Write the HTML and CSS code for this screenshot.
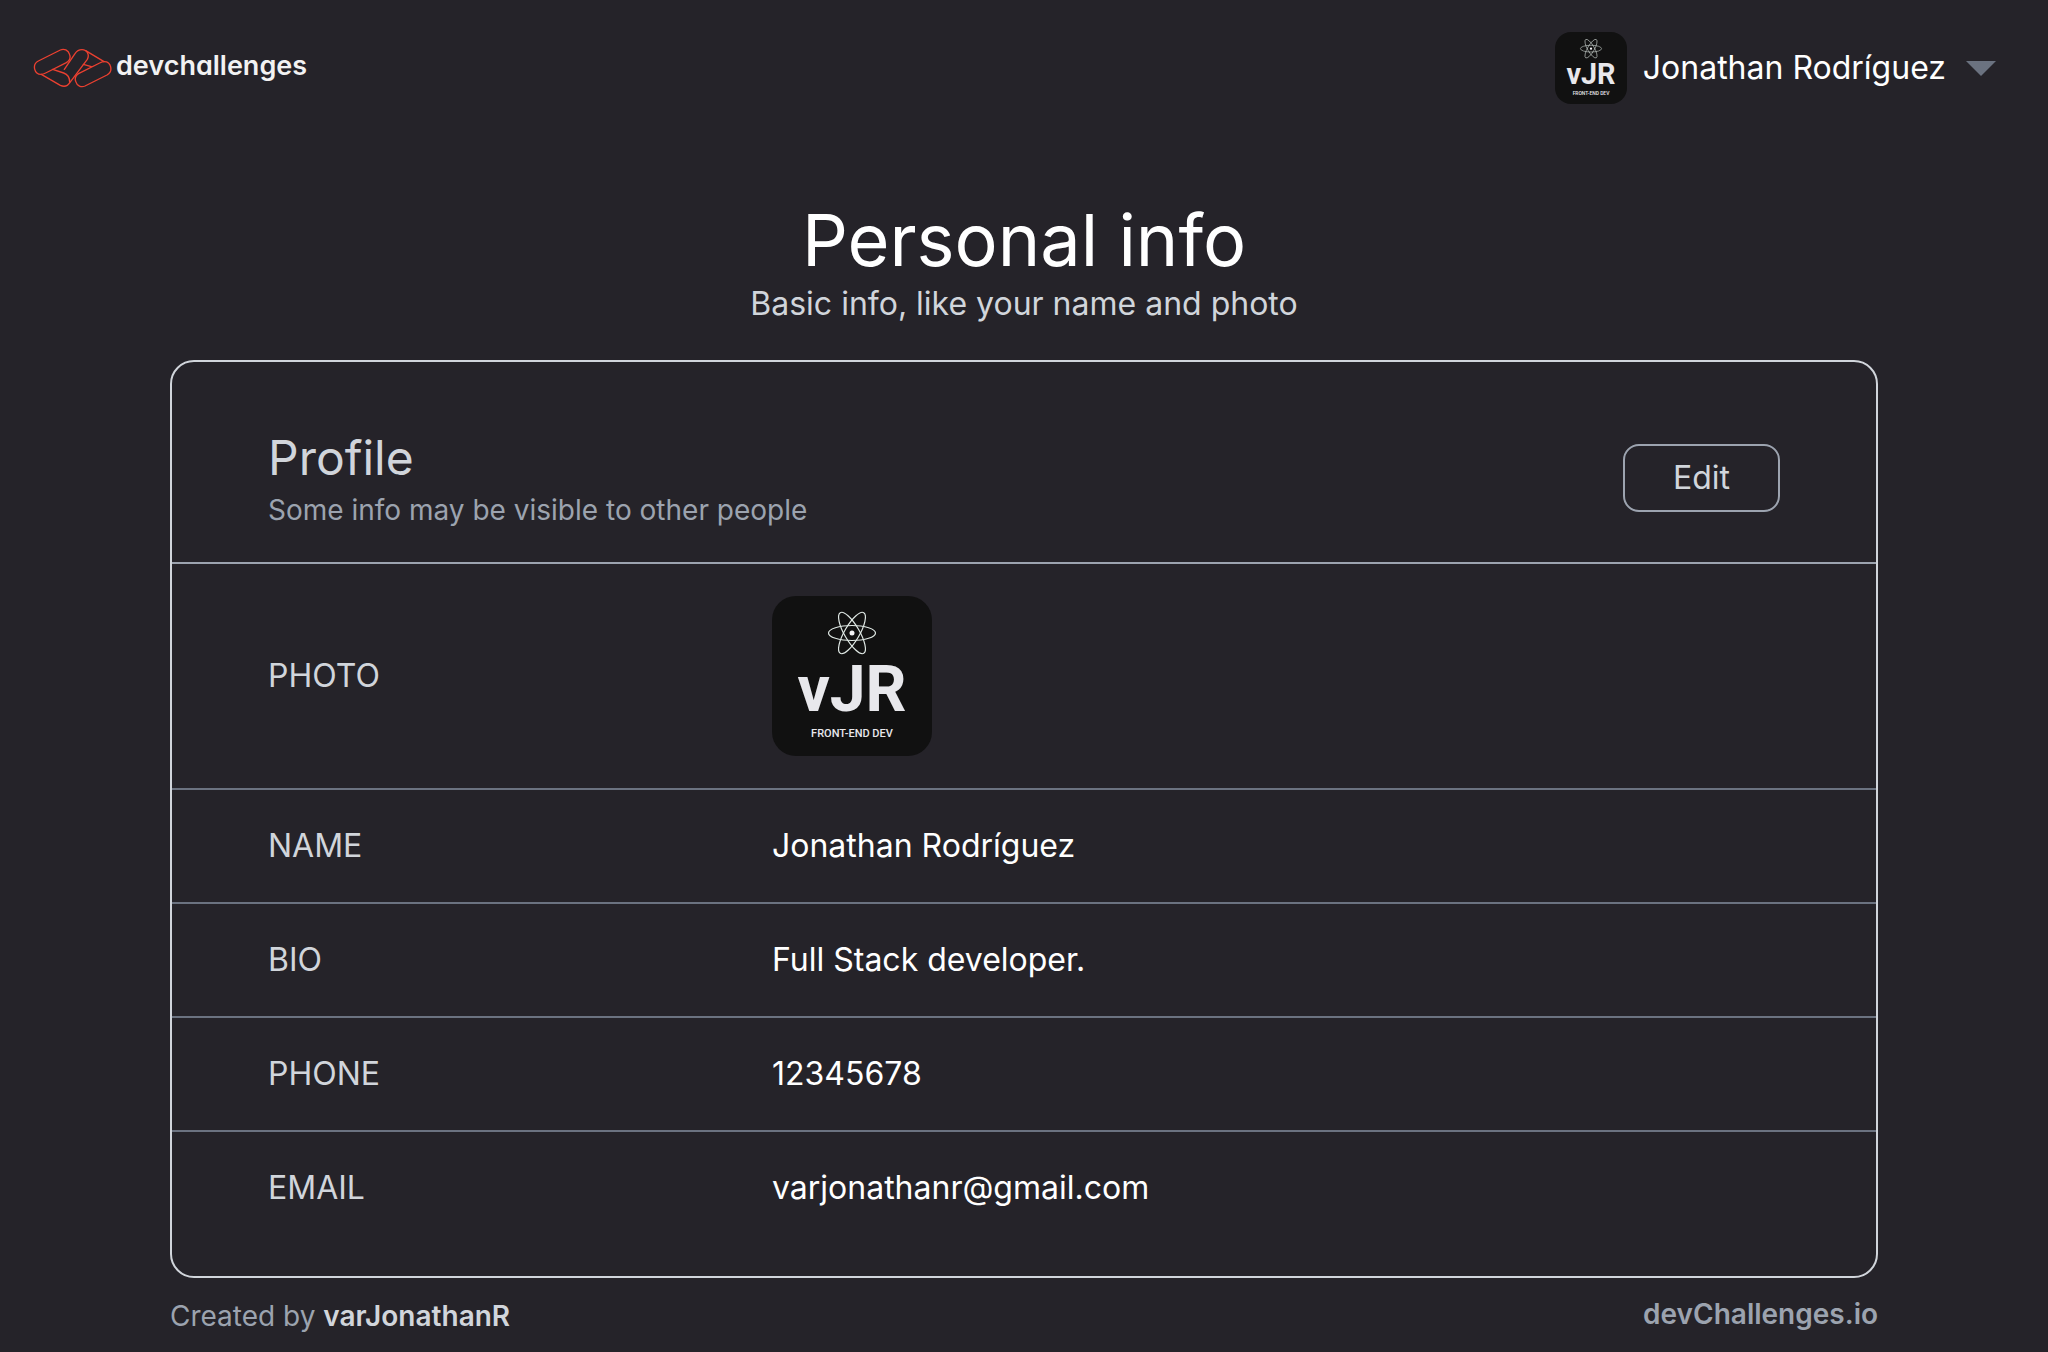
FILE: index.html
```html
<!DOCTYPE html>
<html lang="en">
<head>
<meta charset="utf-8">
<meta name="viewport" content="width=device-width, initial-scale=1">
<title>Personal info</title>
<link rel="stylesheet" href="styles.css">
</head>
<body>
<header class="topbar">
  <a class="brand" href="#">
    <svg class="brand-mark" viewBox="36 54 240 120" aria-hidden="true">
      <g fill="none" stroke="#eb4030" stroke-width="4" stroke-linecap="round" stroke-linejoin="round">
        <path d="M121 60L55 93C35 104 43 133 63 133C69 133 73 131 77 129L139 98C149 92 152 83 149 74C145 60 132 55 121 60Z"/>
        <path d="M195 168L261 135C281 124 273 95 253 95C247 95 243 97 239 99L177 130C167 136 164 145 167 154C171 168 184 173 195 168Z"/>
        <path d="M64 133L121 166C134 172 143 168 150 157L202 88C209 75 202 59 186 59C177 59 170 63 165 71L133 118"/>
        <path d="M98 118L131 129C142 133 149 144 149 156"/>
        <path d="M252 95L197 62M190 103L214 110"/>
      </g>
    </svg>
    <span class="brand-name">devchallenges</span>
  </a>
  <button class="account" type="button">
    <svg class="account-photo" viewBox="0 0 160 160" aria-hidden="true">
      <rect width="160" height="160" fill="#111111"/>
      <g fill="none" stroke="#dfe8e4" stroke-width="1.2">
        <ellipse cx="80" cy="37" rx="23.5" ry="7.5"/>
        <ellipse cx="80" cy="37" rx="23.5" ry="7.5" transform="rotate(60 80 37)"/>
        <ellipse cx="80" cy="37" rx="23.5" ry="7.5" transform="rotate(120 80 37)"/>
      </g>
      <circle cx="80" cy="37" r="2.5" fill="#f4f4f6"/>
      <text class="avatar-name" x="80" y="115" text-anchor="middle">vJR</text>
      <text class="avatar-role" x="80" y="141" text-anchor="middle">FRONT-END DEV</text>
    </svg>
    <span>Jonathan Rodríguez</span>
    <svg class="caret" viewBox="0 0 30 15" aria-hidden="true"><path d="M0 0H30L15 15Z" fill="#6b7280"/></svg>
  </button>
</header>
<main class="page">
  <h1 class="title">Personal info</h1>
  <p class="subtitle">Basic info, like your name and photo</p>
  <section class="card">
    <div class="card-head">
      <div>
        <h2 class="card-title">Profile</h2>
        <p class="card-note">Some info may be visible to other people</p>
      </div>
      <button class="edit" type="button">Edit</button>
    </div>
    <dl class="info">
      <div class="row">
        <dt>PHOTO</dt>
        <dd>
          <svg class="photo" viewBox="0 0 160 160" role="img" aria-label="Profile photo">
            <rect width="160" height="160" fill="#111111"/>
            <g fill="none" stroke="#dfe8e4" stroke-width="1.2">
              <ellipse cx="80" cy="37" rx="23.5" ry="7.5"/>
              <ellipse cx="80" cy="37" rx="23.5" ry="7.5" transform="rotate(60 80 37)"/>
              <ellipse cx="80" cy="37" rx="23.5" ry="7.5" transform="rotate(120 80 37)"/>
            </g>
            <circle cx="80" cy="37" r="2.5" fill="#f4f4f6"/>
            <text class="avatar-name" x="80" y="115" text-anchor="middle">vJR</text>
            <text class="avatar-role" x="80" y="141" text-anchor="middle">FRONT-END DEV</text>
          </svg>
        </dd>
      </div>
      <div class="row"><dt>NAME</dt><dd>Jonathan Rodríguez</dd></div>
      <div class="row"><dt>BIO</dt><dd>Full Stack developer.</dd></div>
      <div class="row"><dt>PHONE</dt><dd>12345678</dd></div>
      <div class="row"><dt>EMAIL</dt><dd>varjonathanr@gmail.com</dd></div>
    </dl>
  </section>
  <footer class="footer">
    <p class="credit">Created by <strong>varJonathanR</strong></p>
    <a class="site" href="#">devChallenges.io</a>
  </footer>
</main>
</body>
</html>
```
FILE: styles.css
```css
*,
*::before,
*::after {
  box-sizing: border-box;
}

body,
h1,
h2,
p,
dl,
dd {
  margin: 0;
}

body {
  background: #252329;
  color: #ffffff;
  font-family: Inter, "Liberation Sans", sans-serif;
  font-size: 32px;
  line-height: 48px;
}

h1,
h2 {
  font-weight: 400;
}

a {
  text-decoration: none;
}

button {
  background: none;
  font: inherit;
  cursor: pointer;
}

svg {
  display: block;
}

.topbar {
  display: flex;
  justify-content: space-between;
  align-items: center;
  padding: 32px 52px 32px 32px;
}

.brand {
  display: flex;
  align-items: center;
  gap: 4px;
  color: #f2f2f2;
}

.brand-mark {
  width: 80px;
  height: 40px;
}

.brand-name {
  font-size: 27px;
  font-weight: 600;
  line-height: 40px;
  font-feature-settings: "cv11";
  padding-bottom: 4px;
}

.account {
  display: flex;
  align-items: center;
  gap: 16px;
  padding: 0;
  border: 0;
  color: #ffffff;
}

.account-photo {
  width: 72px;
  height: 72px;
  border-radius: 16px;
}

.caret {
  width: 30px;
  height: 15px;
  margin-left: 4px;
}

.avatar-name {
  fill: #e8e8ec;
  font-family: Roboto, sans-serif;
  font-size: 64px;
  font-weight: 700;
}

.avatar-role {
  fill: #e8e8ec;
  font-family: Roboto, sans-serif;
  font-size: 11px;
  font-weight: 500;
}

.page {
  width: 83.4%;
  margin: 64px auto 0;
}

.title {
  font-size: 72px;
  line-height: 80px;
  text-align: center;
}

.subtitle {
  color: #d1d5db;
  text-align: center;
}

.card {
  margin-top: 32px;
  padding-bottom: 32px;
  border: 2px solid #d1d5db;
  border-radius: 24px;
}

.card-head {
  display: flex;
  justify-content: space-between;
  align-items: center;
  padding: 64px 96px 32px;
  border-bottom: 2px solid #9ca3af;
}

.card-title {
  color: #d1d5db;
  font-size: 48px;
  line-height: 64px;
}

.card-note {
  color: #9ca3af;
  font-size: 28px;
  line-height: 40px;
}

.edit {
  padding: 8px 48px;
  border: 2px solid #9ca3af;
  border-radius: 16px;
  color: #d1d5db;
}

.row {
  display: grid;
  grid-template-columns: 1fr 2fr;
  align-items: center;
  padding: 32px 96px;
  border-bottom: 2px solid #6b7280;
}

.row:last-child {
  border-bottom: 0;
}

.row dt {
  color: #d1d5db;
}

.photo {
  width: 160px;
  height: 160px;
  border-radius: 24px;
}

.footer {
  display: flex;
  justify-content: space-between;
  align-items: flex-start;
  padding-top: 16px;
  font-size: 28px;
  line-height: 40px;
}

.credit {
  color: #9ca3af;
  line-height: 44px;
}

.credit strong {
  color: #d1d5db;
  font-weight: 600;
}

.site {
  color: #9ca3af;
  font-weight: 600;
}
```
